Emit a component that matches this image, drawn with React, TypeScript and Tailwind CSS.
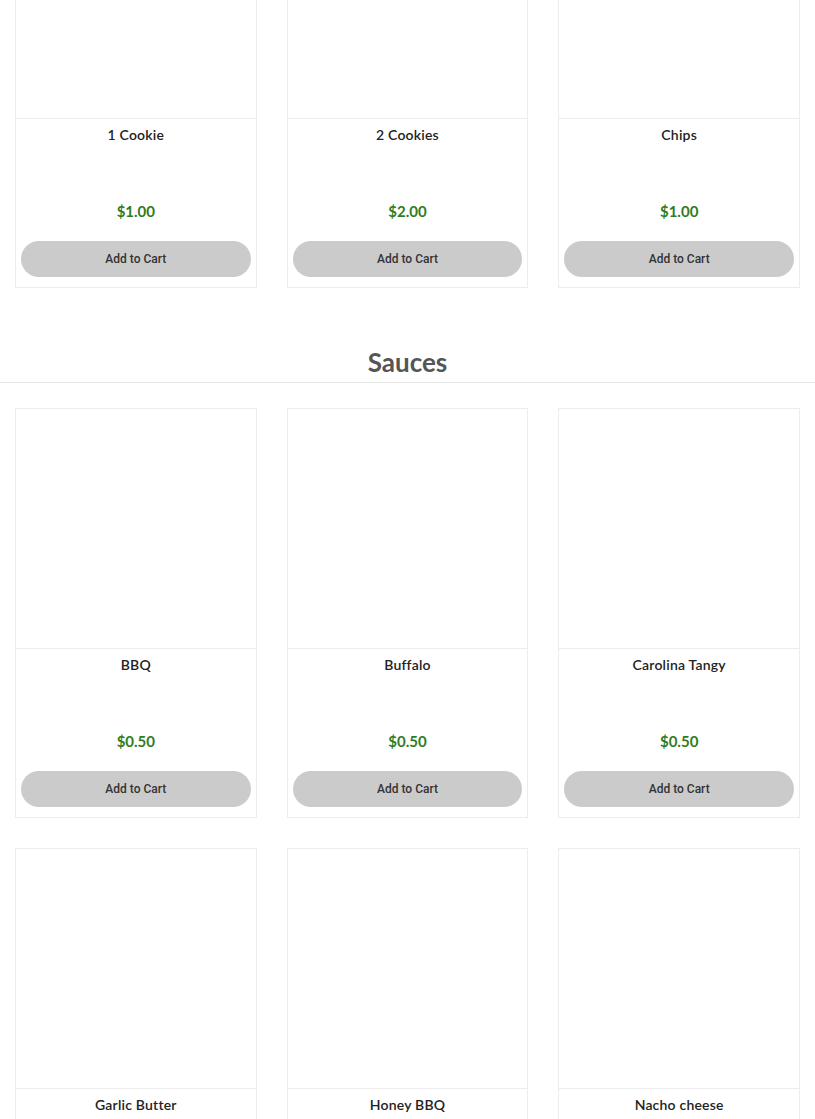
import React from 'react';

interface Item {
  name: string;
  price: string;
}

const sides: Item[] = [
  { name: '1 Cookie', price: '$1.00' },
  { name: '2 Cookies', price: '$2.00' },
  { name: 'Chips', price: '$1.00' },
];

const sauces: Item[] = [
  { name: 'BBQ', price: '$0.50' },
  { name: 'Buffalo', price: '$0.50' },
  { name: 'Carolina Tangy', price: '$0.50' },
  { name: 'Garlic Butter', price: '$0.50' },
  { name: 'Honey BBQ', price: '$0.50' },
  { name: 'Nacho cheese', price: '$0.50' },
];

const ProductCard: React.FC<{ item: Item }> = ({ item }) => (
  <div className="flex flex-col border border-[#ececec] bg-white">
    <div className="h-[240px] border-b border-[#ececec]" />
    <div className="flex flex-col items-center px-[5px] pt-[6px] pb-[10px]">
      <p className="h-5 text-[14px] leading-5 font-semibold text-[#222] tracking-[0.2px]">{item.name}</p>
      <p className="mt-[56px] h-5 text-[15px] leading-5 font-bold text-[#2f7d1e]">{item.price}</p>
      <button className="mt-[20px] h-9 w-full rounded-full bg-[#cbcbcb] text-[12px] font-medium text-[#333] font-['Roboto',sans-serif]">
        Add to Cart
      </button>
    </div>
  </div>
);

const App: React.FC = () => {
  return (
    <div className="min-h-screen overflow-hidden bg-white font-['Lato','Noto_Sans',sans-serif]">
      <div className="-mt-[122px] grid grid-cols-3 gap-[30px] px-[15px]">
        {sides.map((item) => (
          <ProductCard key={item.name} item={item} />
        ))}
      </div>

      <div className="mt-[58px] border-b border-[#e6e6e6] pb-[4px]">
        <h2 className="text-center text-[26px] leading-8 font-bold text-[#555]">Sauces</h2>
      </div>

      <div className="mt-[25px] grid grid-cols-3 gap-[30px] px-[15px] pb-8">
        {sauces.map((item) => (
          <ProductCard key={item.name} item={item} />
        ))}
      </div>
    </div>
  );
};

export default App;
